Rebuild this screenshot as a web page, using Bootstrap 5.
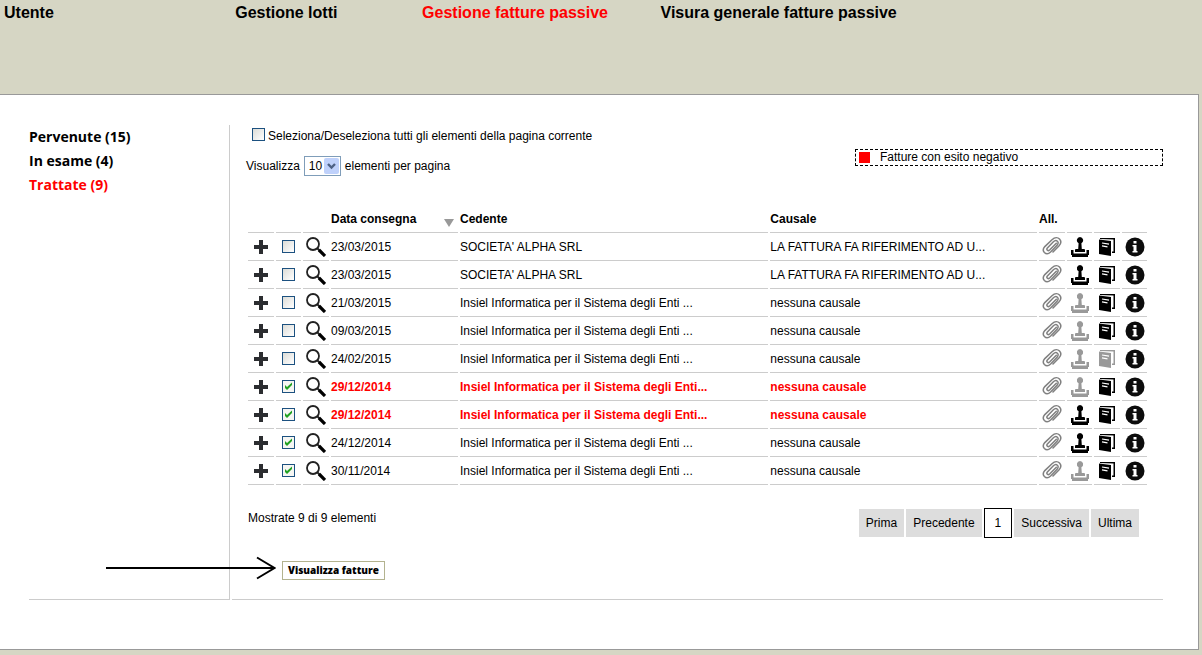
<!DOCTYPE html>
<html lang="it">
<head>
<meta charset="utf-8">
<meta name="viewport" content="width=device-width, initial-scale=1">
<title>Gestione fatture passive</title>
<link rel="stylesheet" href="https://cdn.jsdelivr.net/npm/bootstrap@5.3.0/dist/css/bootstrap.min.css">
<style>
  body { background: #d6d6c4; color: #000; font: 12px/20px "Liberation Sans", Arial, sans-serif; }
  a { color: inherit; text-decoration: none; }
  .top-menu { display: grid; grid-template-columns: 193fr 156fr 199fr 452fr; min-height: 94px; padding: 3px 0 0 4px; font-size: 16px; font-weight: 700; align-items: start; }
  .top-menu a.active, .side-menu a.active, .esito-negativo td { color: #f00; }
  .panel { background: #fff; border: 1px solid #999; border-left: 0; margin: 0 3px 5px 0; padding: 30px 35px 49px 29px; gap: 2px; }
  .side-menu { flex: 0 0 201px; border: solid #ccc; border-width: 0 1px 1px 0; font: 700 14px/24px "Open Sans", sans-serif; }
  .workspace { border-bottom: 1px solid #ccc; padding: 1px 0 19px 14px; min-width: 0; }
  .tick { appearance: none; width: 13px; height: 13px; margin: 0; border: 1px solid #1c5180; background: linear-gradient(135deg, #dcdcd7, #fff); display: block; flex: none; }
  .tick:checked { background: #f6f6f3 url("data:image/svg+xml,%3Csvg xmlns='http://www.w3.org/2000/svg' viewBox='0 0 11 11'%3E%3Cpath d='M2 4v3l2 2 5-5V1.500L4 6z' fill='%2321a121'/%3E%3C/svg%3E"); }
  .select-all { padding-left: 6px; gap: 3px; }
  .select-all .tick { margin-top: 2px; }
  .page-length { margin-top: 10px; }
  .page-size { appearance: none; width: 37px; height: 20px; border: 1px solid #7f9db9; border-radius: 0; padding: 0 0 0 4px; color: #000; font-size: 12px; line-height: 18px;
    background: #fff url("data:image/svg+xml,%3Csvg xmlns='http://www.w3.org/2000/svg' width='15' height='16'%3E%3Crect width='15' height='16' rx='2' fill='%23bfd1fb'/%3E%3Cpath d='M4 6l3.500 3.500L11 6' fill='none' stroke='%234d6185' stroke-width='2.400'/%3E%3C/svg%3E") no-repeat right 1px center; }
  .legend-box { width: 308px; height: 17px; margin-top: 23px; border: 1px dashed #000; line-height: 15px; padding-left: 3px; gap: 10px; }
  .swatch { width: 11px; height: 11px; background: #f00; }
  .invoices { width: calc(100% - 14px); margin: 28px 0 23px; table-layout: fixed; border-collapse: separate; border-spacing: 2px 0; }
  .invoices th, .invoices td { height: 28px; padding: 0; border-bottom: 1px solid #ccc; white-space: nowrap; vertical-align: middle; }
  .invoices th { height: 29px; padding-top: 2px; }
  .invoices svg, .invoices .tick { margin: 0 auto; display: block; }
  .icon-btn { display: block; width: 100%; padding: 0; border: 0; background: none; color: #000; }
  .icon-btn:disabled { color: #999; }
  .esito-negativo { font-weight: 700; }
  .shown-count { padding-left: 2px; }
  .pager { gap: 2px; padding-right: 24px; line-height: 28px; }
  .pager a { display: block; background: #ddd; padding: 0 7px; }
  .pager a.current { background: #fff; border: 1px solid #000; padding: 0 10px; }
  .show-btn { height: 19px; border: 1px solid #b3b38f; background: #fff; color: #000; padding: 0 5px; font: 800 10px/17px "Open Sans", sans-serif; }
  .action { margin: 23px 0 0 36px; }
  .pointer { right: 100%; top: -5px; margin-right: 6px; }
</style>
</head>
<body>
<svg class="d-none">
  <symbol id="i-plus" viewBox="0 0 14 14"><path d="M5 0h4v5h5v4H9v5H5V9H0V5h5z" fill="#2b2d30"/></symbol>
  <symbol id="i-lens" viewBox="0 0 20 20"><circle cx="7" cy="7" r="6" fill="#fff" stroke="#222" stroke-width="1.800"/><path d="M11 11l3 3" stroke="#222" stroke-width="2"/><path d="M13 13l6 6" stroke="#000" stroke-width="3.200"/></symbol>
  <symbol id="i-clip" viewBox="0 0 20 20"><path d="M14.300 6.300L7.600 13c-1.600 1.500-3.600-.3-2.200-2l6-6.200c1.600-1.600 3-1.500 4-.6 1.100 1 1 2.600-.3 4L8.600 15c-2.500 2.400-5 1.700-6.200.5-1.300-1.400-1.700-3.600.4-5.900L10 2.800c3-2.800 6-2.300 7.500-.7s1.900 4.300-.6 6.900L11 15" fill="none" stroke="#808080" stroke-width="1.500" stroke-linecap="round"/></symbol>
  <symbol id="i-stamp" viewBox="0 0 18 20"><path d="M9 0a3.300 3.300 0 0 1 1.400 6.200L10.800 12H13q1 0 1 1v2H4v-2q0-1 1-1h2.200l.4-5.800A3.300 3.300 0 0 1 9 0zM0 13h2.500v3.500h13V13H18v5h-1v2H1v-2H0z" fill="currentColor"/></symbol>
  <symbol id="i-book" viewBox="0 0 16 18"><path d="M0 1.500L12 3v15L0 16zM1 0h15v15h-3v-1.500h1.500V1.500L1 1z" fill="currentColor"/><path d="M3 5l7 1.200M3 7.800l5.500 1" stroke="#fff" stroke-width="1.200"/></symbol>
  <symbol id="i-info" viewBox="0 0 20 20"><circle cx="10" cy="10" r="9.500" fill="#0c0c0c"/><path d="M8.500 4h3v2.500h-3zM7.500 8h4v6h1v1.500h-5V14h1V9.500h-1z" fill="#fff"/></symbol>
</svg>

<nav class="top-menu" aria-label="Menu principale">
  <a href="#">Utente</a>
  <a href="#">Gestione lotti</a>
  <a href="#" class="active">Gestione fatture passive</a>
  <a href="#">Visura generale fatture passive</a>
</nav>

<div class="panel d-flex">
  <nav class="side-menu d-flex flex-column" aria-label="Stato fatture">
    <a href="#">Pervenute (15)</a>
    <a href="#">In esame (4)</a>
    <a href="#" class="active">Trattate (9)</a>
  </nav>

  <main class="workspace flex-fill">
    <div class="d-flex justify-content-between align-items-start">
      <div>
        <div class="select-all d-flex">
          <input class="tick" type="checkbox" id="all">
          <label for="all">Seleziona/Deseleziona tutti gli elementi della pagina corrente</label>
        </div>
        <div class="page-length d-flex gap-1">
          <label for="size">Visualizza</label>
          <select class="page-size" id="size"><option>10</option></select>
          <span>elementi per pagina</span>
        </div>
      </div>
      <div class="legend-box d-flex align-items-center"><span class="swatch"></span><span>Fatture con esito negativo</span></div>
    </div>

    <table class="invoices">
      <colgroup>
        <col style="width:26px"><col style="width:25px"><col style="width:26px"><col style="width:127px"><col style="width:35%"><col>
        <col style="width:26px"><col style="width:25px"><col style="width:26px"><col style="width:25px">
      </colgroup>
      <thead>
        <tr>
          <th></th><th></th><th></th>
          <th><div class="d-flex justify-content-between align-items-center pe-1"><span>Data consegna</span><svg class="m-0 mt-2" width="10" height="8" viewBox="0 0 10 8"><path d="M0 0h10L5 8z" fill="#999"/></svg></div></th>
          <th>Cedente</th><th>Causale</th><th>All.</th><th></th><th></th><th></th>
        </tr>
      </thead>
      <tbody id="rows"></tbody>
    </table>

    <div class="d-flex justify-content-between">
      <div class="shown-count">Mostrate 9 di 9 elementi</div>
      <nav class="pager d-flex align-items-center" aria-label="Pagine">
        <a href="#">Prima</a><a href="#">Precedente</a><a href="#" class="current">1</a><a href="#">Successiva</a><a href="#">Ultima</a>
      </nav>
    </div>

    <div class="action d-flex">
      <div class="position-relative d-flex">
        <svg class="pointer position-absolute" width="170" height="24" viewBox="0 0 170 24"><path d="M0 12h168M151 1.500L168.500 12 151 22.500" fill="none" stroke="#000" stroke-width="2"/></svg>
        <button type="button" class="show-btn">Visualizza fatture</button>
      </div>
    </div>
  </main>
</div>

<script src="https://cdn.jsdelivr.net/npm/bootstrap@5.3.0/dist/js/bootstrap.bundle.min.js"></script>
<script>
  const insiel = 'Insiel Informatica per il Sistema degli Enti ...';
  // data, cedente, causale, selezionata, negativa, timbro attivo, registro attivo
  const invoices = [
    ['23/03/2015', "SOCIETA' ALPHA SRL", 'LA FATTURA FA RIFERIMENTO AD U...', 0, 0, 1, 1],
    ['23/03/2015', "SOCIETA' ALPHA SRL", 'LA FATTURA FA RIFERIMENTO AD U...', 0, 0, 1, 1],
    ['21/03/2015', insiel, 'nessuna causale', 0, 0, 0, 1],
    ['09/03/2015', insiel, 'nessuna causale', 0, 0, 0, 1],
    ['24/02/2015', insiel, 'nessuna causale', 0, 0, 0, 0],
    ['29/12/2014', insiel.replace(' ...', '...'), 'nessuna causale', 1, 1, 0, 1],
    ['29/12/2014', insiel.replace(' ...', '...'), 'nessuna causale', 1, 1, 1, 1],
    ['24/12/2014', insiel, 'nessuna causale', 1, 0, 1, 1],
    ['30/11/2014', insiel, 'nessuna causale', 1, 0, 0, 1]
  ];
  const icon = (id, label, w, h, on = 1) =>
    `<td><button type="button" class="icon-btn" aria-label="${label}"${on ? '' : ' disabled'}><svg width="${w}" height="${h}"><use href="#i-${id}"/></svg></button></td>`;
  document.getElementById('rows').innerHTML = invoices.map(([date, from, cause, sel, neg, stamp, book]) => `
    <tr${neg ? ' class="esito-negativo"' : ''}>
      ${icon('plus', 'Espandi', 14, 14)}
      <td><input class="tick" type="checkbox" aria-label="Seleziona fattura"${sel ? ' checked' : ''}></td>
      ${icon('lens', 'Dettaglio', 20, 20)}
      <td>${date}</td><td>${from}</td><td>${cause}</td>
      ${icon('clip', 'Allegati', 20, 20)}${icon('stamp', 'Timbro', 18, 20, stamp)}${icon('book', 'Registro', 16, 18, book)}${icon('info', 'Informazioni', 20, 20)}
    </tr>`).join('');
</script>
</body>
</html>
